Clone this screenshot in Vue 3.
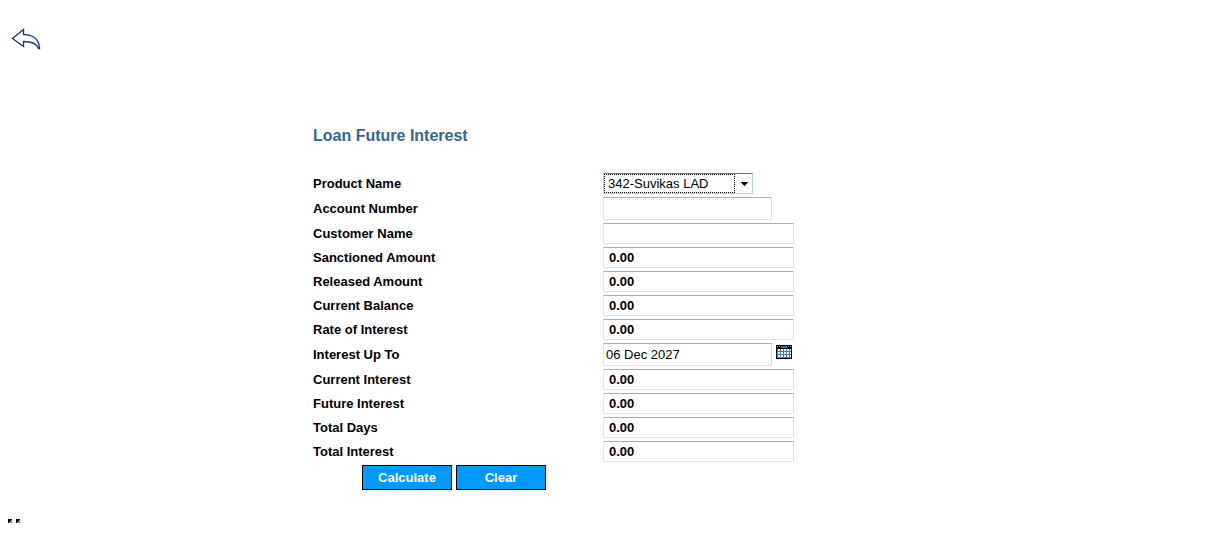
<script setup>
import { ref, reactive } from 'vue'

const product = ref('342-Suvikas LAD')
const fields = reactive([
  { id: 'account', label: 'Account Number', value: '', kind: 'entry' },
  { id: 'customer', label: 'Customer Name', value: '', kind: 'amount' },
  { id: 'sanctioned', label: 'Sanctioned Amount', value: '0.00', kind: 'amount' },
  { id: 'released', label: 'Released Amount', value: '0.00', kind: 'amount' },
  { id: 'balance', label: 'Current Balance', value: '0.00', kind: 'amount' },
  { id: 'rate', label: 'Rate of Interest', value: '0.00', kind: 'amount' },
  { id: 'upto', label: 'Interest Up To', value: '06 Dec 2027', kind: 'entry', calendar: true },
  { id: 'current', label: 'Current Interest', value: '0.00', kind: 'amount' },
  { id: 'future', label: 'Future Interest', value: '0.00', kind: 'amount' },
  { id: 'days', label: 'Total Days', value: '0.00', kind: 'amount' },
  { id: 'total', label: 'Total Interest', value: '0.00', kind: 'amount' }
])

function clearForm() {
  for (const f of fields) {
    if (f.kind === 'amount') f.value = f.id === 'customer' ? '' : '0.00'
  }
}
</script>

<template>
  <div class="page">
    <header class="top">
      <a href="#" class="back" aria-label="Back">
        <svg width="32" height="24" viewBox="0 0 32 24" fill="none" stroke="#1c3c82" stroke-width="1.4">
          <path d="M2.500 10.500 L13.500 1.500 V6.500 C20 6.500 28.500 9 29.500 19.500 V20.500 H28.500 C26.500 14.500 20 13.500 13.500 13.500 V18.500 Z" />
        </svg>
      </a>
    </header>

    <form class="loan" @submit.prevent>
      <h1>Loan Future Interest</h1>
      <div class="rows">
        <div class="row">
          <label for="product">Product Name</label>
          <div class="picker">
            <select id="product" v-model="product">
              <option>342-Suvikas LAD</option>
            </select>
            <span class="focus"></span>
            <svg class="arrow" width="7" height="4" viewBox="0 0 7 4" shape-rendering="crispEdges">
              <path d="M0 0H7V1H6V2H5V3H4V4H3V3H2V2H1V1H0Z" fill="#000" />
            </svg>
          </div>
        </div>
        <div v-for="f in fields" :key="f.id" class="row">
          <label :for="f.id">{{ f.label }}</label>
          <div class="control">
            <input :id="f.id" v-model="f.value" type="text" :class="f.kind" />
            <button v-if="f.calendar" type="button" class="calendar" aria-label="Choose date">
              <svg width="16" height="14" viewBox="0 0 16 14" shape-rendering="crispEdges">
                <rect width="16" height="14" fill="#000" />
                <path d="M5 1H11V3H5Z" fill="#3a6ea5" />
                <path d="M1 1H2V2H1ZM3 1H4V2H3ZM12 1H13V2H12ZM14 1H15V2H14Z" fill="#8fb4d8" />
                <rect x="1" y="4" width="14" height="9" fill="#3f78b5" />
                <path d="M2 5H15M2 8H15M2 11H15" stroke="#fff" stroke-width="2" stroke-dasharray="2 1" />
              </svg>
            </button>
          </div>
        </div>
      </div>
      <div class="actions">
        <button type="submit">Calculate</button>
        <button type="button" @click="clearForm">Clear</button>
      </div>
    </form>

    <footer class="marks">
      <svg v-for="n in 2" :key="n" width="4" height="4" viewBox="0 0 4 4" shape-rendering="crispEdges">
        <rect width="4" height="4" fill="#888" />
        <path d="M0 0H4V1H3V2H2V3H1V4H0Z" fill="#000" />
      </svg>
    </footer>
  </div>
</template>

<style>
body {
  margin: 0;
  background: #fff;
}
</style>

<style scoped>
.page {
  padding: 28px 8px 12px;
  font-family: "Liberation Sans", Arial, sans-serif;
  font-size: 13px;
  color: #000;
}
.top {
  display: flex;
  padding-left: 2px;
}
.back {
  display: block;
  height: 24px;
}
.loan {
  max-width: 587px;
  margin: 75px auto 0;
}
h1 {
  margin: 0 0 28px;
  font-size: 16px;
  line-height: 18px;
  color: #336699;
}
.rows {
  display: flex;
  flex-direction: column;
  gap: 3px;
}
.row {
  display: grid;
  grid-template-columns: 290px 1fr;
  align-items: center;
}
label {
  font-weight: bold;
  line-height: 16px;
}
.picker {
  position: relative;
  width: 150px;
  height: 21px;
}
select {
  appearance: none;
  display: block;
  box-sizing: border-box;
  width: 100%;
  height: 21px;
  margin: 0;
  padding: 0 20px 0 4px;
  border: 1px solid #b5cfe7;
  border-top-color: #3d7bad;
  border-radius: 1px;
  background: #fff;
  font: 13px "Liberation Sans", Arial, sans-serif;
  color: #000;
  outline: none;
}
.focus {
  position: absolute;
  inset: 1px 18px 1px 1px;
  border: 1px dotted #000;
  pointer-events: none;
}
.arrow {
  position: absolute;
  top: 9px;
  right: 5px;
  pointer-events: none;
}
.control {
  display: flex;
  align-items: flex-start;
  gap: 4px;
}
input {
  box-sizing: border-box;
  margin: 0;
  border: 1px solid #e2e3ea;
  border-top-color: #abadb3;
  border-right-color: #dbdfe6;
  border-radius: 1px;
  background: #fff;
  font: 13px "Liberation Sans", Arial, sans-serif;
  color: #000;
  outline: none;
}
.entry {
  width: 169px;
  height: 23px;
  padding: 0 2px;
}
.amount {
  width: 191px;
  height: 21px;
  padding: 0 5px;
  font-weight: bold;
}
.calendar {
  display: block;
  margin-top: 2px;
  padding: 0;
  border: 0;
  background: none;
}
.calendar svg {
  display: block;
}
.actions {
  display: flex;
  gap: 4px;
  padding: 3px 0 0 49px;
}
.actions button {
  width: 90px;
  height: 25px;
  padding: 0;
  border: 1px solid #000;
  background: #0099ff;
  font: bold 13px "Liberation Sans", Arial, sans-serif;
  color: #fff;
}
.marks {
  display: flex;
  gap: 4px;
  margin-top: 29px;
}
.marks svg {
  display: block;
}
</style>
